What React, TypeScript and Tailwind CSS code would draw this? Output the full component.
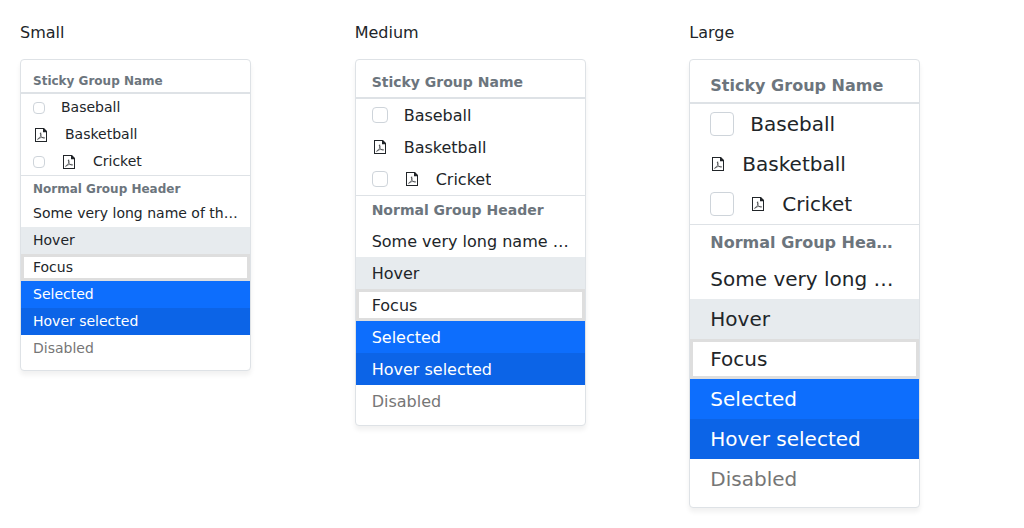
import React from "react";

type SizeStyle = {
  name: string;
  header: string;
  row: string;
  box: string;
  icon: string;
};

const sizes: SizeStyle[] = [
  {
    name: "Small",
    header: "px-3 pt-1 pb-0.5 text-[12px] leading-[18px]",
    row: "px-3 py-[3px] text-[14px] leading-[21px]",
    box: "mt-[5px] size-3 rounded-[4px]",
    icon: "mt-[3px]",
  },
  {
    name: "Medium",
    header: "px-4 py-1 text-[14px] leading-[21px]",
    row: "px-4 pt-[5px] pb-[3px] text-[16px] leading-6",
    box: "mt-[3px] size-4 rounded-[4px]",
    icon: "mt-[3px]",
  },
  {
    name: "Large",
    header: "px-5 pt-1.5 pb-1 text-[16px] leading-6",
    row: "px-5 py-[5px] text-[20px] leading-[30px]",
    box: "mt-[3px] size-6 rounded-[4px]",
    icon: "mt-[7px]",
  },
];

function PdfIcon({ className }: { className: string }) {
  return (
    <svg viewBox="0 0 16 16" className={`size-4 shrink-0 ${className}`} aria-hidden="true">
      <path
        fill="currentColor"
        fillRule="evenodd"
        d="M2 1h9l3 3v11H2zM3 2v12h10V5.200H10V2z"
      />
      <path
        fill="none"
        stroke="currentColor"
        strokeWidth="0.6"
        strokeLinecap="round"
        strokeLinejoin="round"
        d="M7.500 6.200c.6-.3.700.6.500 1.500C7.600 9.700 5.800 12.300 4.700 12.500c-.7-.3.500-1.300 2.500-1.700 2-.5 4.500-.6 4.500.1 0 .6-1.700.3-2.700-.6C8 9.400 7.200 7 7.500 6.200z"
      />
    </svg>
  );
}

function CheckItem({ size, text, icon }: { size: SizeStyle; text: string; icon?: boolean }) {
  return (
    <li>
      <label className={`flex items-start gap-4 ${size.row}`}>
        <input
          type="checkbox"
          className={`shrink-0 appearance-none border border-[#ced4da] bg-white checked:bg-[#0d6efd] ${size.box}`}
        />
        {icon && <PdfIcon className={size.icon} />}
        <span className="truncate">{text}</span>
      </label>
    </li>
  );
}

function List({ size }: { size: SizeStyle }) {
  return (
    <section className="min-w-0 px-2.5">
      <h2 className="mb-3.5 text-[16px] leading-6">{size.name}</h2>
      <div className="w-full max-w-[231px] rounded-[4px] border border-[#dee2e6] bg-white py-2 shadow-[0_4px_5px_rgba(0,0,0,0.06)]">
        <div className={`truncate border-b-2 border-[#dee2e6] font-bold text-[#6c757d] ${size.header}`}>
          Sticky Group Name
        </div>
        <ul>
          <CheckItem size={size} text="Baseball" />
          <li className={`flex items-start gap-4 ${size.row}`}>
            <PdfIcon className={size.icon} />
            <span className="truncate">Basketball</span>
          </li>
          <CheckItem size={size} text="Cricket" icon />
        </ul>
        <div className={`truncate border-t border-[#dee2e6] font-bold text-[#6c757d] ${size.header}`}>
          Normal Group Header
        </div>
        <ul>
          <li className={`truncate ${size.row}`}>Some very long name of the item</li>
          <li className={`truncate bg-[#e7ebee] ${size.row}`}>Hover</li>
          <li className={`truncate shadow-[inset_0_0_0_3px_#dedede] ${size.row}`}>Focus</li>
          <li className={`truncate bg-[#0d6efd] text-white ${size.row}`}>Selected</li>
          <li className={`truncate bg-[#0c64e7] text-white ${size.row}`}>Hover selected</li>
          <li className={`truncate text-[#767676] ${size.row}`}>Disabled</li>
        </ul>
      </div>
    </section>
  );
}

export default function App() {
  return (
    <main className="grid grid-cols-3 bg-white px-2.5 pt-[21px] pb-5 font-['DejaVu_Sans',sans-serif] text-[#212529]">
      {sizes.map((size) => (
        <List key={size.name} size={size} />
      ))}
    </main>
  );
}
